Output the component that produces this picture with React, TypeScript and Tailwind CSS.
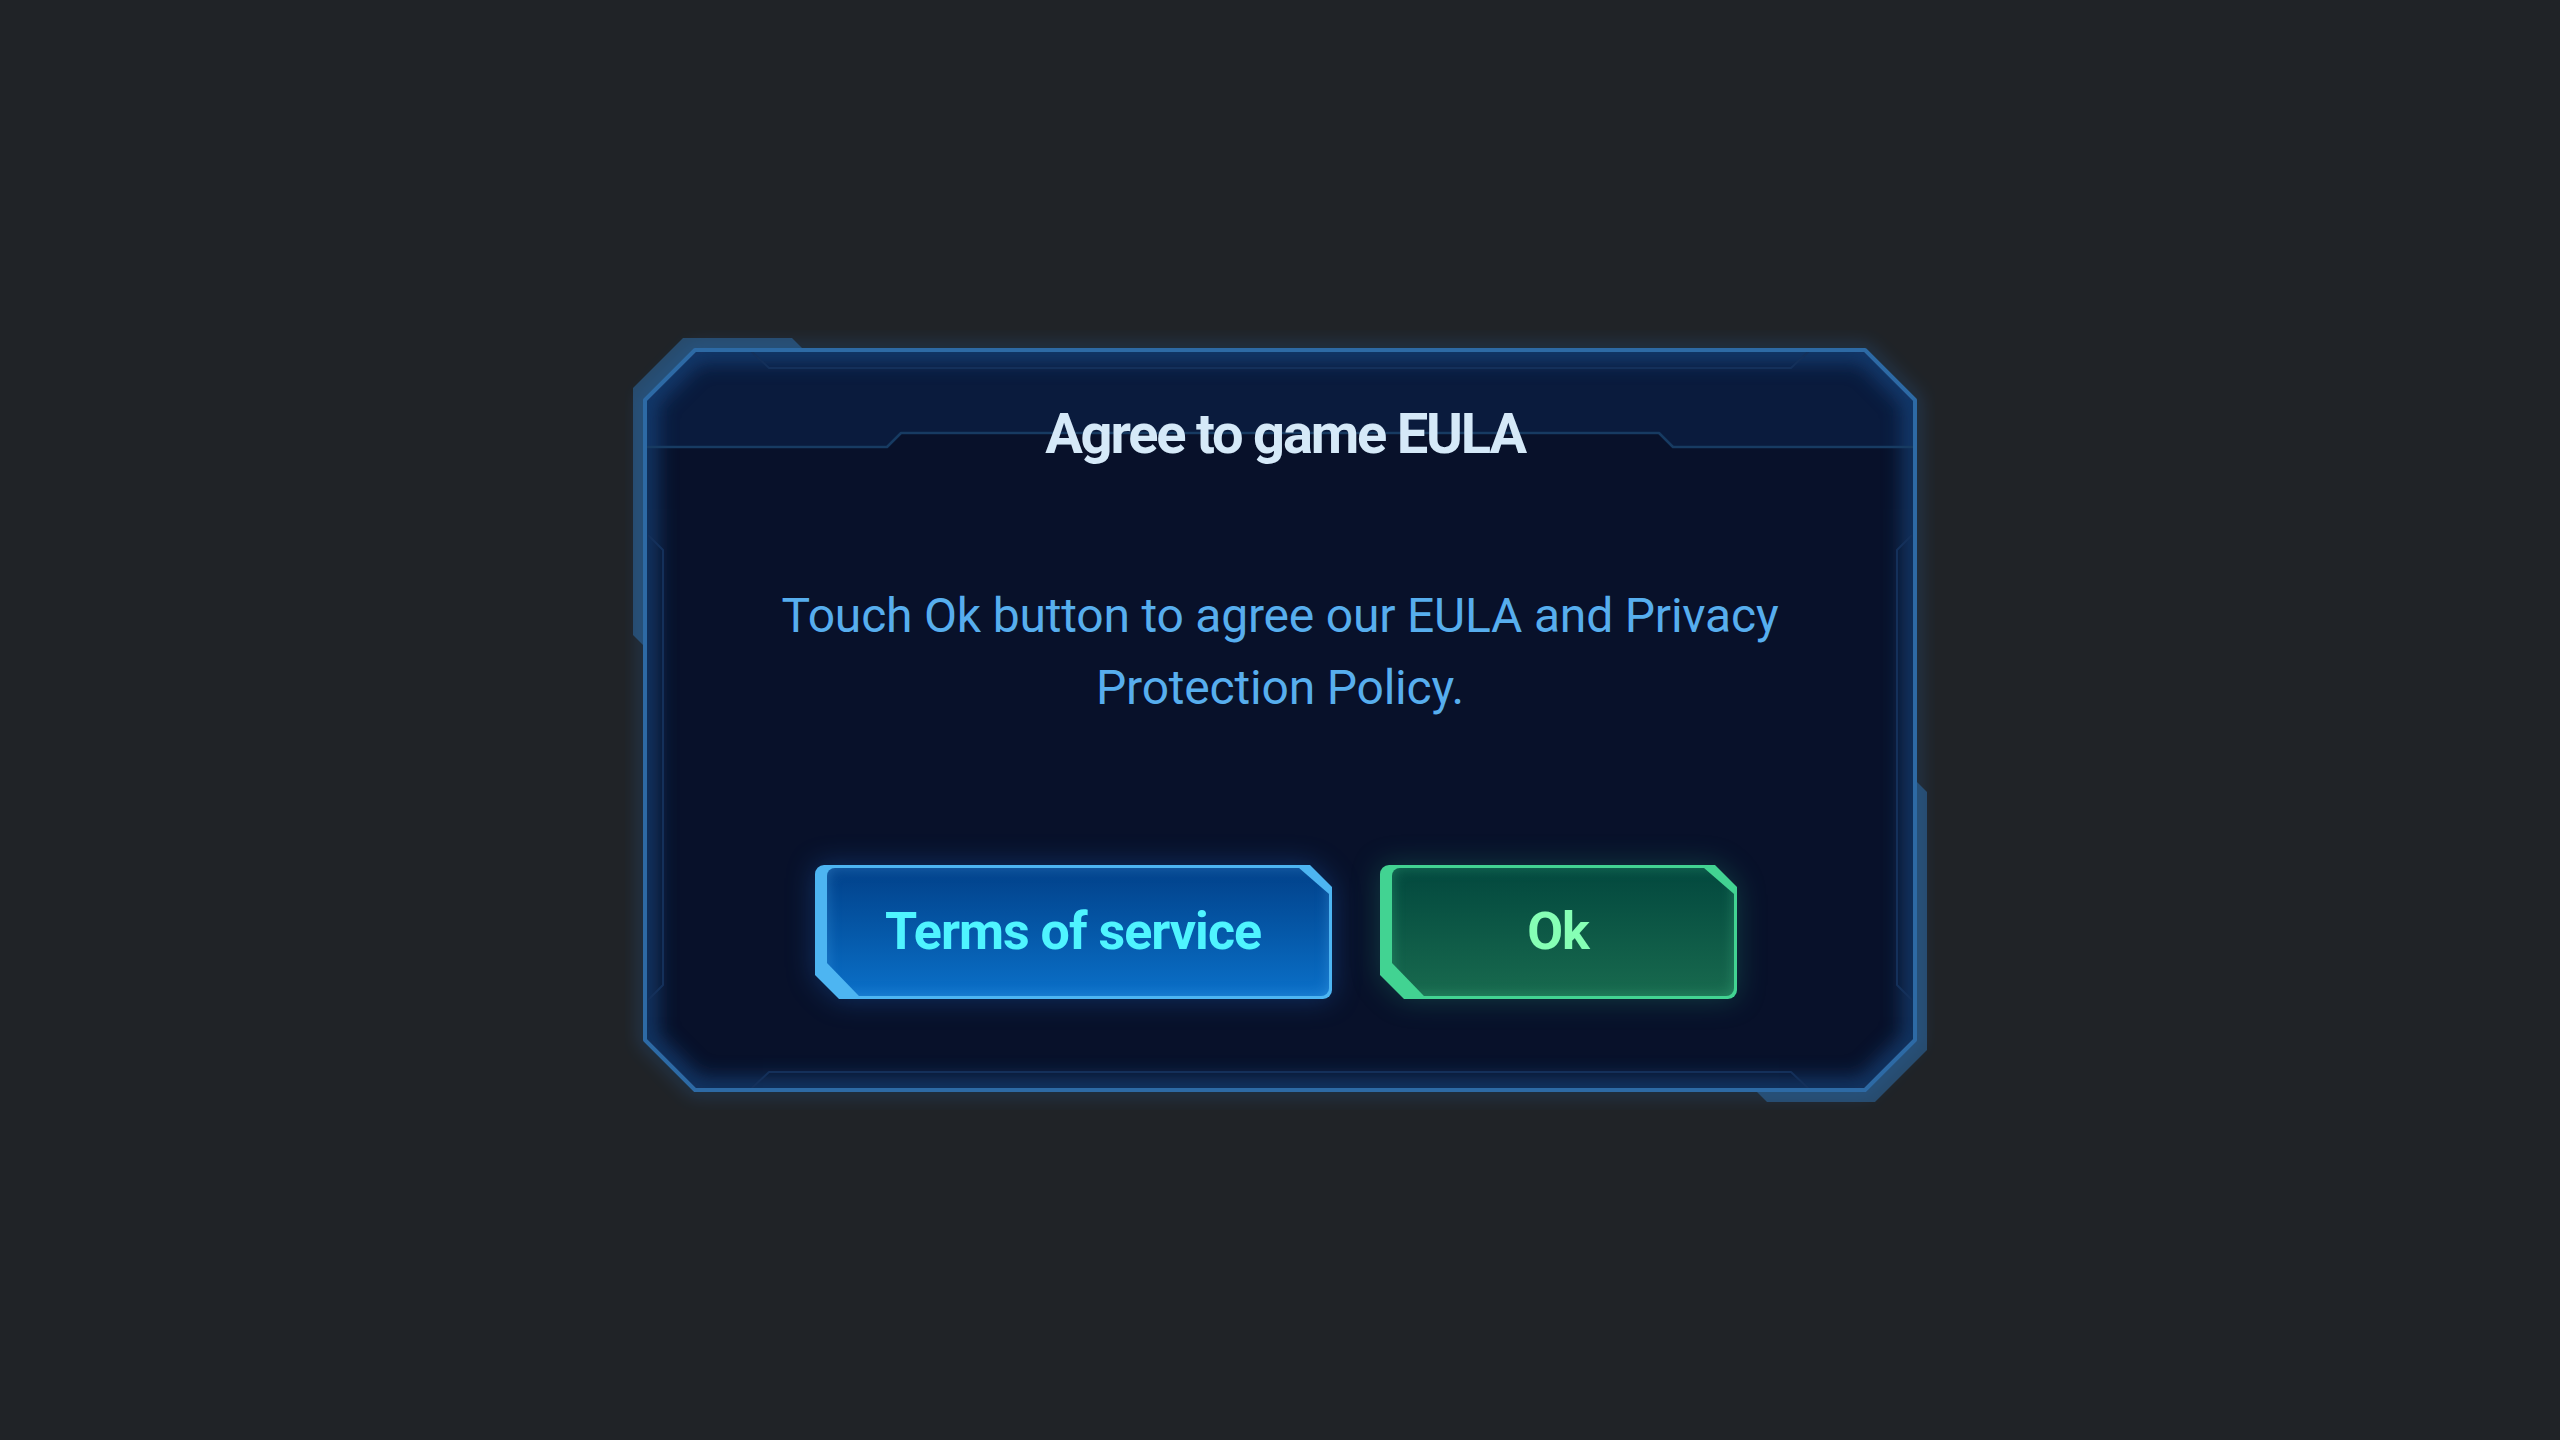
const framePath = "M50,0 H1220 L1270,50 V690 L1220,740 H50 L0,690 V50 Z";

// decorative sci-fi frame drawn behind the dialog content
const DialogFrame = () => (
  <svg
    className="absolute -left-5 -top-5 pointer-events-none"
    width={1310}
    height={780}
    viewBox="-20 -20 1310 780"
  >
    <defs>
      <filter id="glowOut" x="-10%" y="-10%" width="120%" height="120%">
        <feGaussianBlur stdDeviation="9" />
      </filter>
      <filter id="glowIn" x="-10%" y="-10%" width="120%" height="120%">
        <feGaussianBlur stdDeviation="10" />
      </filter>
      <clipPath id="frameClip">
        <path d={framePath} />
      </clipPath>
    </defs>

    {/* back plates */}
    <path d="M-12,38 L38,-12 H147 L162,3 L3,300 L-12,285 Z" fill="#274a6b" strokeLinejoin="round" />
    <path d="M1268,428 L1282,442 V700 L1230,752 H1122 L1108,738 Z" fill="#274a6b" strokeLinejoin="round" />

    {/* outer glow */}
    <path d={framePath} fill="none" stroke="#2a7ad0" strokeWidth={10} opacity={0.3} filter="url(#glowOut)" />

    {/* body + header */}
    <path d={framePath} fill="#08112a" />
    <path
      d="M50,0 H1220 L1270,50 V97 H1028 L1014,83 H256 L242,97 H0 V50 Z"
      fill="#0a1b3d"
    />

    {/* inner glow */}
    <g clipPath="url(#frameClip)">
      <path d={framePath} fill="none" stroke="#1b5596" strokeWidth={26} opacity={0.55} filter="url(#glowIn)" />
    </g>

    {/* thin inner lines */}
    <g fill="none" stroke="#14305a" strokeWidth={2} strokeLinejoin="round">
      <polyline points="106,1 124,18 1146,18 1164,1" />
      <polyline points="106,739 124,722 1146,722 1164,739" />
      <polyline points="3,185 18,200 18,635 3,650" />
      <polyline points="1267,185 1252,200 1252,635 1267,650" />
    </g>
    <polyline
      points="0,97 242,97 256,83 1014,83 1028,97 1270,97"
      fill="none"
      stroke="#173b62"
      strokeWidth={2.5}
      strokeLinejoin="round"
    />

    {/* main border */}
    <path d={framePath} fill="none" stroke="#2d6aa5" strokeWidth={4} strokeLinejoin="round" />
  </svg>
);

type ButtonProps = {
  label: string;
  width: string;
  variant: "blue" | "green";
};

const GameButton = ({ label, width, variant }: ButtonProps) => {
  const blue = variant === "blue";
  return (
    <div
      className={`${width} h-[134px] ${
        blue
          ? "drop-shadow-[0_0_14px_rgba(30,110,210,0.35)]"
          : "drop-shadow-[0_0_14px_rgba(40,190,140,0.25)]"
      }`}
    >
      <div
        className={`w-full h-full rounded-[9px] pt-[3px] pr-[3px] pb-[3px] pl-[12px] [clip-path:polygon(0_0,calc(100%_-_22px)_0,100%_22px,100%_100%,24px_100%,0_calc(100%_-_24px))] ${
          blue ? "bg-[#4db5f2]" : "bg-[#42d392]"
        }`}
      >
        <div
          className={`w-full h-full rounded-[8px] flex items-center justify-center [clip-path:polygon(0_0,calc(100%_-_30px)_0,100%_26px,100%_100%,32px_100%,0_calc(100%_-_33px))] ${
            blue
              ? "bg-gradient-to-b from-[#02418a] to-[#0b70c8] shadow-[inset_0_0_14px_rgba(90,180,245,0.35)]"
              : "bg-gradient-to-b from-[#03483e] to-[#186a4e] shadow-[inset_0_0_14px_rgba(80,220,160,0.3)]"
          }`}
        >
          <span
            className={`text-[52px] leading-none font-bold tracking-[-1px] -translate-x-[5px] ${
              blue ? "text-[#4ff4ff]" : "text-[#86ffb5]"
            }`}
          >
            {label}
          </span>
        </div>
      </div>
    </div>
  );
};

const App = () => {
  return (
    <div className="min-h-screen w-full bg-[#202327] flex items-center justify-center [font-family:Roboto,'Noto_Sans',sans-serif]">
      <div className="relative w-[1270px] h-[740px]">
        <DialogFrame />

        <div className="relative flex flex-col items-center">
          <h1 className="pt-[56px] pl-[10px] text-[56px] leading-none font-bold tracking-[-2.2px] text-[#d5e9f8]">
            Agree to game EULA
          </h1>

          <p className="mt-[118px] max-w-[1060px] text-center text-[48px] leading-[72px] tracking-[-0.2px] text-[#57aeee]">
            Touch Ok button to agree our EULA and Privacy Protection Policy.
          </p>

          <div className="mt-[141px] mr-[8px] flex gap-[48px]">
            <GameButton label="Terms of service" width="w-[517px]" variant="blue" />
            <GameButton label="Ok" width="w-[357px]" variant="green" />
          </div>
        </div>
      </div>
    </div>
  );
};

export default App;
